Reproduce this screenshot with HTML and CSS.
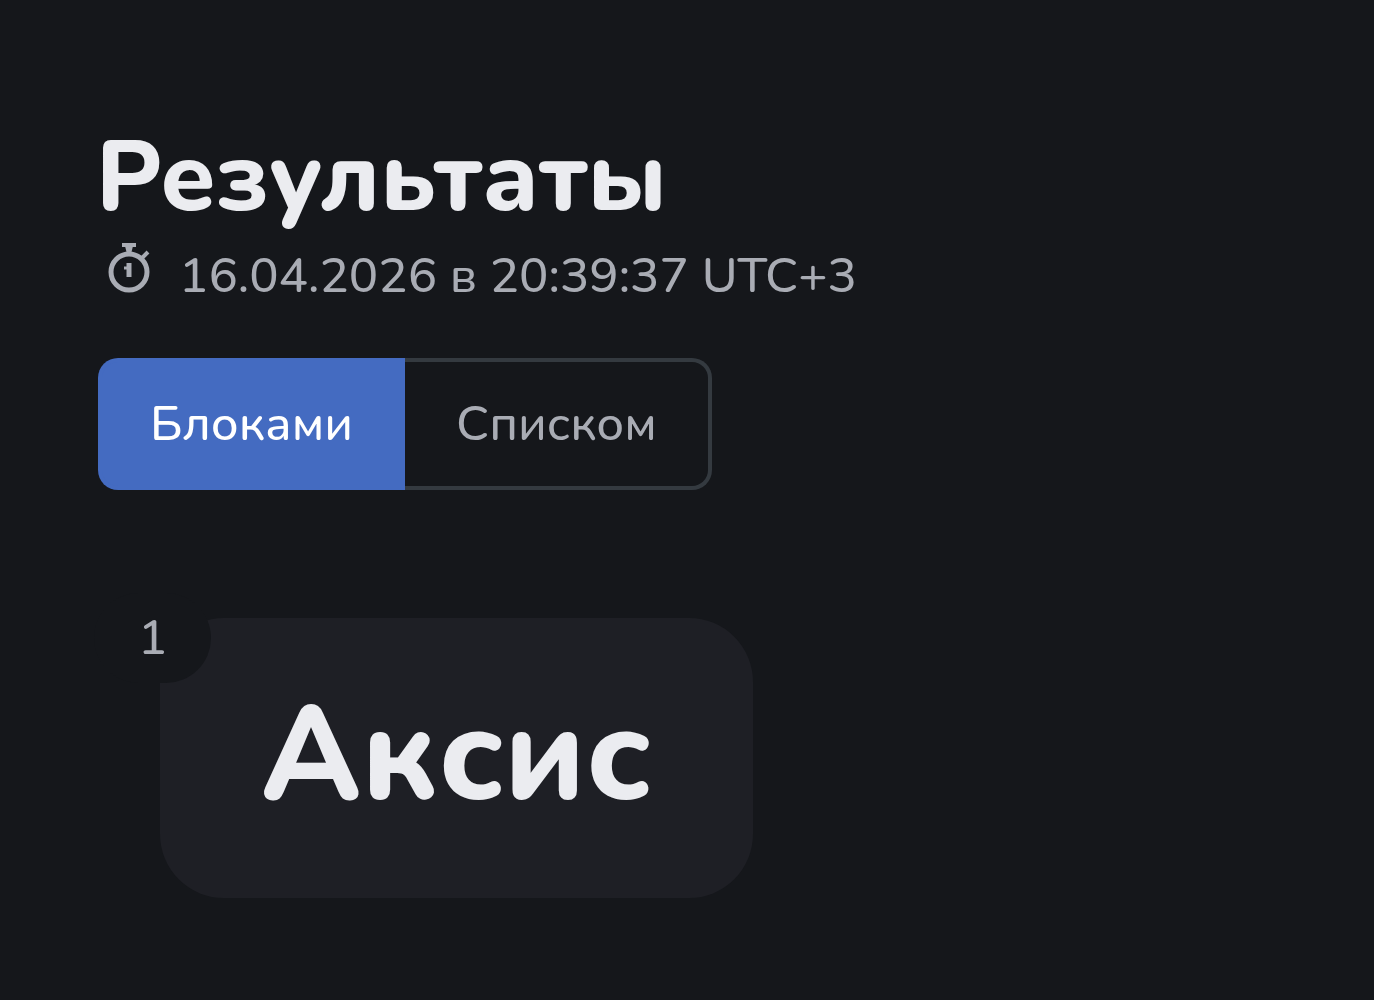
FILE: index.html
```html
<!DOCTYPE html>
<html lang="ru">
<head>
    <meta charset="utf-8">
    <title>Результаты</title>
    <link rel="stylesheet" href="styles.css">
</head>
<body>
    <main class="page">
        <h1 class="title">Результаты</h1>
        <div class="date">
            <svg class="date-icon" viewBox="0 0 44 52" aria-hidden="true">
                <circle cx="22" cy="30" r="18" fill="none" stroke="currentColor" stroke-width="5"/>
                <path d="M15 3h14M35 16l6-6" fill="none" stroke="currentColor" stroke-width="4"/>
                <path d="M18 4h8l-2 8h-4z" fill="currentColor"/>
                <path d="M22 21v14" fill="none" stroke="currentColor" stroke-width="5"/>
                <path d="M17 26h5" fill="none" stroke="currentColor" stroke-width="3"/>
            </svg>
            <span>16.04.2026 в 20:39:37 UTC+3</span>
        </div>
        <div class="switch">
            <button type="button" class="switch-btn active" aria-pressed="true">Блоками</button>
            <button type="button" class="switch-btn" aria-pressed="false">Списком</button>
        </div>
        <div class="results">
            <div class="card">
                <span class="card-number">1</span>
                <span class="card-name">Аксис</span>
            </div>
        </div>
    </main>
</body>
</html>
```

FILE: styles.css
```css
body {
    margin: 0;
    min-height: 100vh;
    background: #15171b;
    color: #ebecf0;
    font-family: Nunito, "Open Sans", "Noto Sans", sans-serif;
}
.page {
    padding: 118px 96px 0;
}
.title {
    margin: 0;
    font-size: 99px;
    line-height: 120px;
    font-weight: 800;
}
.date {
    display: flex;
    align-items: center;
    gap: 28px;
    padding-left: 11px;
    color: #a9acb4;
    font-size: 49px;
    font-weight: 500;
    line-height: 76px;
}
.date-icon {
    width: 44px;
    height: 52px;
    margin-bottom: 16px;
}
.switch {
    display: flex;
    width: fit-content;
    margin: 44px 0 0 2px;
}
.switch-btn {
    padding: 0 51px;
    border: 4px solid #343a40;
    border-left: 0;
    border-radius: 0 20px 20px 0;
    background: none;
    color: #a9acb4;
    font: inherit;
    font-size: 49px;
    font-weight: 500;
    line-height: 124px;
}
.switch-btn.active {
    padding: 0 52px 0 48px;
    border: 4px solid #446bc1;
    border-right: 0;
    border-radius: 20px 0 0 20px;
    background: #446bc1;
    color: #ffffff;
}
.results {
    display: flex;
    margin-top: 128px;
    padding-left: 64px;
}
.card {
    position: relative;
    padding: 48px 101px 52px;
    border-radius: 64px;
    background: #1e1f25;
}
.card-number {
    position: absolute;
    top: -25px;
    left: -66px;
    padding: 0 44px;
    border-radius: 48px;
    background: #15171b;
    color: #a9acb4;
    font-size: 49px;
    font-weight: 500;
    line-height: 90px;
}
.card-name {
    display: block;
    font-size: 133px;
    line-height: 180px;
    font-weight: 800;
}
```
